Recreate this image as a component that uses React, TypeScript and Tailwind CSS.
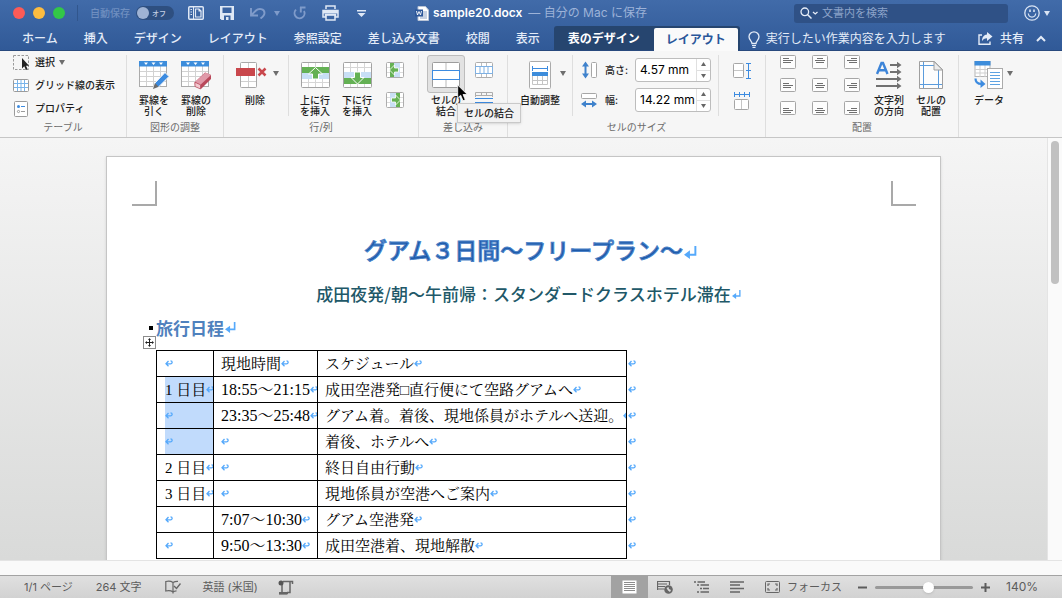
import React from "react";

type Kids = { children?: React.ReactNode };

const UI = "font-['Inter','Noto_Sans_CJK_JP',sans-serif]";
const GOTHIC = "font-['Noto_Sans_CJK_JP',sans-serif]";
const MINCHO = "font-['Liberation_Serif','Noto_Serif_CJK_JP','Noto_Sans_CJK_JP',serif]";

function Svg({ w, h, children, className }: Kids & { w: number; h: number; className?: string }) {
  return (
    <svg width={w} height={h} viewBox={`0 0 ${w} ${h}`} fill="none" className={`shrink-0 ${className ?? ""}`} aria-hidden="true">
      {children}
    </svg>
  );
}

function Caret({ className }: { className?: string }) {
  return (
    <Svg w={6} h={5} className={className}>
      <path d="M0 0h6L3 5z" fill="currentColor" />
    </Svg>
  );
}

/* ---------- title bar ---------- */

function TitleBar() {
  return (
    <div className="grid h-[26px] grid-cols-[1fr_auto_1fr] items-center text-[#d9e4f4]">
      <div className="flex items-center">
        <div className="ml-[13px] flex gap-2">
          <button aria-label="閉じる" className="size-3 rounded-full bg-[#fc5b57]" />
          <button aria-label="しまう" className="size-3 rounded-full bg-[#fdbc40]" />
          <button aria-label="拡大" className="size-3 rounded-full bg-[#33c748]" />
        </div>
        <span className="ml-3 h-4 w-px bg-[#31568d]" />
        <label className="ml-3 flex items-center gap-[6px] text-[10px] font-medium text-[#6f8fc0]">
          自動保存
          <span className="relative flex h-[14px] w-[38px] items-center rounded-full bg-[#2e4f80]">
            <input type="checkbox" className="peer absolute inset-0 m-0 cursor-pointer appearance-none rounded-full" />
            <span className="pointer-events-none ml-px size-3 rounded-full bg-[#9fb3d4]" />
            <span className="pointer-events-none ml-[3px] text-[7px] leading-none text-[#c3d0e4]">オフ</span>
          </span>
        </label>
        <button aria-label="サイドバー" className="ml-[14px]">
          <Svg w={16} h={14}>
            <rect x="0.75" y="0.75" width="14.5" height="12.5" rx="1" stroke="#dfe8f5" strokeWidth="1.5" />
            <path d="M5.500 1v12" stroke="#dfe8f5" />
            <path d="M2.500 3.500h1.500M2.500 6h1.500M2.500 8.500h1.500" stroke="#dfe8f5" />
            <path d="M7.500 3h3.500l2 2v6h-5.500z" stroke="#dfe8f5" strokeWidth="1.2" />
            <path d="M10.500 2.500L13.500 5.500h-3z" fill="#dfe8f5" />
          </Svg>
        </button>
        <button aria-label="保存" className="ml-4">
          <Svg w={14} h={14}>
            <path d="M0 0h14v14H1.500L0 12.500z" fill="#dfe8f5" />
            <path d="M2.500 1.500h9V7h-9zM4 9.500h6.500V14H8.500v-3H6v3H4z" fill="#3a63a1" />
          </Svg>
        </button>
        <button aria-label="元に戻す" className="ml-4 flex items-center gap-2 text-[#7f9bca]">
          <Svg w={16} h={12}>
            <path d="M1 1v7.500h7M1.500 8L6 3.500C8.500 1 14.500 1.500 14.500 6c0 2.200-1.400 3.600-4 5.500" stroke="currentColor" strokeWidth="1.900" />
          </Svg>
          <Caret />
        </button>
        <button aria-label="やり直し" className="ml-[13px] text-[#7f9bca]">
          <Svg w={13} h={14}>
            <path d="M3 3.700A5 5 0 1 0 11 5M7 1.500h5.500M7.800 1v5.500" stroke="currentColor" strokeWidth="1.900" />
          </Svg>
        </button>
        <button aria-label="印刷" className="ml-4">
          <Svg w={17} h={16}>
            <path d="M4 4V1h9v3M1 5.500h15v6.500h-2.500v-2.500h-10V12H1z" stroke="#dfe8f5" strokeWidth="1.500" />
            <path d="M1 5h15v3.500H1z" fill="#dfe8f5" />
            <rect x="4" y="10" width="9" height="5" stroke="#dfe8f5" strokeWidth="1.500" />
          </Svg>
        </button>
        <button aria-label="カスタマイズ" className="ml-[18px]">
          <Svg w={9} h={7}>
            <path d="M0 .75h9" stroke="#dfe8f5" strokeWidth="1.500" />
            <path d="M.5 3h8l-4 4z" fill="#dfe8f5" />
          </Svg>
        </button>
      </div>

      <div className="flex items-center text-[12px] whitespace-nowrap">
        <Svg w={14} h={15} className="mr-1">
          <path d="M3 .5h7.500L13.500 4v10.500H3z" fill="#fff" stroke="#b9c4d6" />
          <path d="M5 6h7M5 8h7M5 10h7M5 12h7" stroke="#8fa4c6" />
          <path d="M0 3.500h8v7H0z" fill="#2c579a" />
          <path d="M1.500 5l1 4 1.500-3.500L5.500 9l1-4" stroke="#fff" strokeWidth=".9" />
        </Svg>
        <h1 className="text-[12px] font-semibold text-white">sample20.docx</h1>
        <span className="ml-[6px] text-[#9db3d8]">— 自分の Mac に保存</span>
      </div>

      <div className="flex items-center justify-end">
        <label className="flex h-[19px] w-[214px] items-center rounded-[3px] bg-[#2f5186] pl-[6px]">
          <Svg w={18} h={12}>
            <circle cx="4.800" cy="4.800" r="3.800" stroke="#e6edf8" strokeWidth="1.300" />
            <path d="M7.500 7.500l4 4" stroke="#e6edf8" strokeWidth="1.500" />
            <path d="M13 5l2.250 2L17.500 5" stroke="#e6edf8" strokeWidth="1.300" />
          </Svg>
          <input
            type="search"
            aria-label="文書内を検索"
            placeholder="文書内を検索"
            className="ml-1 w-full min-w-0 bg-transparent text-[11px] text-white outline-none placeholder:text-[#8ca3c9]"
          />
        </label>
        <button aria-label="フィードバック" className="mr-3 ml-4 flex items-center gap-1">
          <Svg w={16} h={16}>
            <circle cx="8" cy="8" r="7.200" stroke="#d9e4f4" strokeWidth="1.300" />
            <path d="M4.300 8.500c.5 4.700 6.900 4.700 7.400 0" stroke="#d9e4f4" strokeWidth="1.200" />
            <path d="M6 4.500v2.500M10 4.500v2.500" stroke="#d9e4f4" strokeWidth="1.600" />
          </Svg>
          <Caret />
        </button>
      </div>
    </div>
  );
}

const TABS = ["ホーム", "挿入", "デザイン", "レイアウト", "参照設定", "差し込み文書", "校閲", "表示"];

function TabBar() {
  return (
    <nav className="flex h-[25px] items-stretch border-b border-[#28497d] pl-[9px] text-[12px] whitespace-nowrap text-[#e4ecf8]">
      {TABS.map((t) => (
        <button key={t} className="px-[13px] pt-[2px] font-medium">
          {t}
        </button>
      ))}
      <div className="ml-px flex items-stretch rounded-t-[3px] bg-[#26456f] pr-[2px]">
        <button className="px-[14px] pt-[2px] font-bold text-white">表のデザイン</button>
        <button className="-mb-px mt-[2px] rounded-t-[2px] bg-[#fafafa] px-3 font-bold text-[#2b579a]">レイアウト</button>
      </div>
      <button className="ml-2 flex items-center gap-[6px] pt-[2px]">
        <Svg w={12} h={17}>
          <path d="M4 12.500c0-2.500-3-3.500-3-6.700a5 5 0 0 1 10 0c0 3.200-3 4.200-3 6.700z" stroke="#e4ecf8" strokeWidth="1.300" />
          <path d="M4 14.500h4M4.500 16.300h3" stroke="#e4ecf8" strokeWidth="1.200" />
        </Svg>
        実行したい作業内容を入力します
      </button>
      <div className="mr-4 ml-auto flex items-center gap-3 pt-px">
        <button className="flex items-center gap-[7px] font-medium">
          <Svg w={15} h={13}>
            <path d="M4 3H1v9.300h11V9.500" stroke="#e4ecf8" strokeWidth="1.400" />
            <path d="M9 0l5.500 4.500L9 9V6.300C6.500 6.300 5 7.300 4 9.300c0-4.300 2-6.500 5-6.800z" fill="#e4ecf8" />
          </Svg>
          共有
        </button>
        <button aria-label="リボンを折りたたむ">
          <Svg w={10} h={7}>
            <path d="M1 6l4-4 4 4" stroke="#e4ecf8" strokeWidth="2" />
          </Svg>
        </button>
      </div>
    </nav>
  );
}

/* ---------- ribbon ---------- */

function Group({ label, className, children }: Kids & { label?: string; className: string }) {
  return (
    <section className={`flex shrink-0 flex-col border-r border-[#dedede] ${className}`}>
      <div className="flex h-[66px] items-start">{children}</div>
      <div className="h-3 text-center text-[10px] leading-3 text-[#6b6b6b]">{label}</div>
    </section>
  );
}

function Big({ lines, className, icon, caret }: { lines: string[]; className: string; icon: React.ReactNode; caret?: boolean }) {
  return (
    <button className={`relative flex shrink-0 flex-col items-center pt-1 ${className}`}>
      <span className="flex h-8 items-center">{icon}</span>
      {caret && <Caret className="absolute top-[16px] left-full -ml-1 text-[#6e6e6e]" />}
      <span className="mt-1 text-[10px] leading-[11px] font-medium whitespace-nowrap text-[#1d1d1d]">
        {lines.map((l) => (
          <span key={l} className="block">
            {l}
          </span>
        ))}
      </span>
    </button>
  );
}

function ShortDivider() {
  return <span className="h-[61px] w-px shrink-0 bg-[#dedede]" />;
}

function GridBase() {
  return (
    <>
      <rect x=".5" y="1.500" width="27" height="25" fill="#fff" stroke="#ababab" />
      <path d="M7.500 6v20M14.500 6v20M21.500 6v20M1 11.500h26M1 16.500h26M1 21.500h26" stroke="#d2d2d2" />
      <path d="M0 1h28v5.500H0z" fill="#3d8ddb" />
      <path d="M5 2.500h4L7 5zM12.500 2.500h4l-2 2.500zM20 2.500h4L22 5z" fill="#fff" />
    </>
  );
}

const DrawTable = (
  <Svg w={30} h={30}>
    <GridBase />
    <path d="M14 29l2-6L26 12.500l4 4L19.500 27z" fill="#3c8be0" stroke="#f6f6f6" />
    <path d="M14 29l2-6 3.700 3.800z" fill="#6b6b6b" />
  </Svg>
);

const EraseTable = (
  <Svg w={30} h={30}>
    <GridBase />
    <path d="M13.500 22.500L24 12.500l6 2.500v4L20 29l-6-2.500z" fill="#b8485a" />
    <path d="M14 22L24.500 12.500 30 15 19.500 24.800z" fill="#e09aa9" />
    <path d="M14 22.300l5.500 2.500V29L14 26.500z" fill="#f2c9d0" stroke="#b8485a" strokeWidth=".7" />
  </Svg>
);

const DeleteIcon = (
  <Svg w={38} h={28}>
    <rect x="4.500" y="1.500" width="16" height="25" rx="1" fill="#fff" stroke="#a9a9a9" />
    <path d="M12.500 2v24M5 20.500h15" stroke="#cfcfcf" />
    <rect x="0" y="7" width="19" height="8" fill="#c9474c" />
    <path d="M22.500 7.500l7 7M29.500 7.500l-7 7" stroke="#c9474c" strokeWidth="2.500" />
  </Svg>
);

function InsertRow({ down }: { down?: boolean }) {
  return (
    <Svg w={29} h={28}>
      <rect x=".5" y="1.500" width="28" height="25" rx="1" fill="#fff" stroke="#a3a3a3" />
      <path d="M7.500 2v24M14.500 2v24M21.500 2v24M1 6.500h27M1 21.500h27" stroke="#d6d6d6" />
      {down ? (
        <>
          <path d="M1 11h27v6H1z" fill="#c8dff5" />
          <path d="M1 17h27v6H1z" fill="#64b154" />
          <path d="M14.500 23l6.500-6.500h-3.500V11h-6v5.500H8z" fill="#64b154" stroke="#fff" />
        </>
      ) : (
        <>
          <path d="M1 12h27v6H1z" fill="#c8dff5" />
          <path d="M1 6h27v6H1z" fill="#64b154" />
          <path d="M14.500 6.500l7 6.500h-4v5h-6v-5h-4z" fill="#64b154" stroke="#fff" />
        </>
      )}
    </Svg>
  );
}

function InsertCol({ right }: { right?: boolean }) {
  return (
    <button aria-label={right ? "右に列を挿入" : "左に列を挿入"}>
      <Svg w={18} h={16}>
        <rect x=".5" y=".5" width="17" height="15" rx="1" fill="#fff" stroke="#adadad" />
        <path d="M1 5.500h16M1 10.500h16" stroke="#dcdcdc" />
        {right ? (
          <>
            <path d="M4 1h6v14H4z" fill="#c8dff5" />
            <path d="M10 1h4v14h-4z" fill="#64b154" />
            <path d="M14.500 8L9.500 3v3H5.500v4h4v3z" fill="#64b154" stroke="#fff" strokeWidth=".8" />
          </>
        ) : (
          <>
            <path d="M8 1h6v14H8z" fill="#c8dff5" />
            <path d="M4 1h4v14H4z" fill="#64b154" />
            <path d="M3.500 8l5-5v3h4v4h-4v3z" fill="#64b154" stroke="#fff" strokeWidth=".8" />
          </>
        )}
      </Svg>
    </button>
  );
}

const MergeIcon = (
  <Svg w={28} h={28}>
    <rect x=".5" y="1.500" width="27" height="25" rx="1" fill="#fff" stroke="#9d9d9d" />
    <path d="M14 2v7M14 19v7" stroke="#b9b9b9" />
    <rect x=".5" y="9.500" width="27" height="9" fill="#fff" stroke="#3c8be0" />
  </Svg>
);

const AutoFit = (
  <Svg w={22} h={28}>
    <rect x=".5" y=".5" width="21" height="27" rx="1" fill="#fff" stroke="#ababab" />
    <path d="M3.500 5v5M18.500 5v5M4 7.500h14" stroke="#3c8be0" />
    <path d="M3 11h16v4H3z" fill="#3d8ddb" />
    <path d="M3.500 15v8.500h15V15M8.500 15v8.500M13.500 15v8.500M4 19.500h14" stroke="#c4c4c4" />
  </Svg>
);

const TextDirection = (
  <Svg w={26} h={28}>
    <path d="M1 13L5.500 2h1.500L11.500 13M2.800 9.300h7" stroke="#3c84d8" strokeWidth="2.400" />
    <path d="M14 4h9M14 11h9M0 18h23M0 25h23" stroke="#707070" strokeWidth="2" />
    <path d="M21 .8L25.500 4 21 7.200zM21 7.800l4.500 3.200-4.500 3.200zM21 14.800l4.500 3.200-4.500 3.200zM21 21.800l4.500 3.200-4.500 3.200z" fill="#707070" />
  </Svg>
);

const CellMargins = (
  <Svg w={24} h={28}>
    <path d="M.5 .5h15l8 8v19H.5z" fill="#fdfdfd" stroke="#9f9f9f" />
    <path d="M4.500 1v26M19.500 9v18M1 4.500h15M1 23.500h22" stroke="#5a9bdc" />
    <path d="M15 .5v8.500h8.500z" fill="#ececec" stroke="#9f9f9f" />
  </Svg>
);

const DataIcon = (
  <Svg w={30} h={28}>
    <rect x="1" y=".5" width="15" height="15" fill="#fff" stroke="#b5b5b5" />
    <path d="M6 4v12M11 4v12M1 8.500h15M1 12h15" stroke="#cfcfcf" />
    <path d="M.5 0h16v4.500H.5z" fill="#3d8ddb" />
    <rect x="13.500" y="7.500" width="15" height="20" fill="#fff" stroke="#ababab" />
    <path d="M16 11.500h10M16 14.500h10M16 17.500h10M16 20.500h10M16 23.500h10" stroke="#5ea3e2" />
    <path d="M1.500 17.500c0 4 2 5.500 6 5.500" stroke="#3c8be0" strokeWidth="2.200" />
    <path d="M6.500 18.500l5 4.500-5 4z" fill="#3c8be0" />
  </Svg>
);

function SizeField({ id, label, value, icon }: { id: string; label: string; value: string; icon: React.ReactNode }) {
  return (
    <div className="flex h-6 items-center">
      <span className="flex w-4 justify-center">{icon}</span>
      <label htmlFor={id} className="ml-2 w-[30px] text-[10px] font-medium text-[#1d1d1d]">
        {label}
      </label>
      <div className="flex h-6 w-[76px] overflow-hidden rounded-[3px] border border-[#bdbdbd] bg-white">
        <input id={id} defaultValue={value} className="w-full min-w-0 pl-1 text-[12px] text-black outline-none" />
        <div className="flex w-[14px] shrink-0 flex-col border-l border-[#e0e0e0] text-[#666]">
          <button aria-label={`${label}増やす`} className="flex flex-1 items-center justify-center border-b border-[#e0e0e0]">
            <Svg w={5} h={4}>
              <path d="M0 4h5L2.500 0z" fill="currentColor" />
            </Svg>
          </button>
          <button aria-label={`${label}減らす`} className="flex flex-1 items-center justify-center">
            <Svg w={5} h={4}>
              <path d="M0 0h5L2.500 4z" fill="currentColor" />
            </Svg>
          </button>
        </div>
      </div>
    </div>
  );
}

const ALIGN_X = ["左", "中央", "右"];
const ALIGN_Y = ["上", "中", "下"];

function AlignButton({ col, row }: { col: number; row: number }) {
  const y = [3.5, 5.5, 7.5][row];
  const widths = [6, 10, 8];
  return (
    <button aria-label={`${ALIGN_Y[row]}揃え（${ALIGN_X[col]}）`}>
      <Svg w={16} h={14}>
        <rect x=".5" y=".5" width="15" height="13" rx="1" fill="#fdfdfd" stroke="#a6a6a6" />
        {widths.map((w, i) => {
          const x = col === 0 ? 3 : col === 1 ? 8 - w / 2 : 13 - w;
          return <path key={i} d={`M${x} ${y + i * 2}h${w}`} stroke="#6f6f6f" />;
        })}
      </Svg>
    </button>
  );
}

function Ribbon() {
  return (
    <div className="flex h-[87px] shrink-0 border-b border-[#c6c6c6] bg-[#f6f6f6] pt-1">
      <Group label="テーブル" className="w-[127px]">
        <div className="flex flex-col gap-2 pl-[13px] text-[10px] font-medium whitespace-nowrap text-[#1d1d1d]">
          <button className="flex h-[15px] items-center gap-[6px]">
            <Svg w={16} h={16}>
              <rect x=".5" y=".5" width="15" height="14" stroke="#9b9b9b" strokeDasharray="2.500 1.500" />
              <path d="M9 3v10.500l2.300-2.200 1.600 3.700 1.700-.8-1.600-3.500h3z" fill="#222" />
            </Svg>
            選択
            <Caret className="-ml-[2px] text-[#6e6e6e]" />
          </button>
          <button className="flex h-[15px] items-center gap-[6px]">
            <Svg w={16} h={13}>
              <rect x=".5" y=".5" width="15" height="12" rx="1" fill="#fff" stroke="#9b9b9b" />
              <path d="M4.500 1v11M8 1v11M11.500 1v11M1 4.500h14M1 8.500h14" stroke="#79b4ea" />
            </Svg>
            グリッド線の表示
          </button>
          <button className="flex h-[15px] items-center gap-[6px]">
            <span className="flex w-4 justify-center">
              <Svg w={14} h={16}>
                <rect x=".5" y=".5" width="13" height="15" rx="1" fill="#fff" stroke="#9b9b9b" />
                <circle cx="4.500" cy="5.500" r="1.500" fill="#3c8be0" />
                <path d="M7 5.500h4" stroke="#3c8be0" />
                <circle cx="4.500" cy="10.500" r="1.100" stroke="#9b9b9b" />
                <path d="M7 10.500h4" stroke="#9b9b9b" />
              </Svg>
            </span>
            プロパティ
          </button>
        </div>
      </Group>

      <Group label="図形の調整" className="w-[97px]">
        <Big lines={["罫線を", "引く"]} className="ml-[6px] w-[42px]" icon={DrawTable} />
        <Big lines={["罫線の", "削除"]} className="w-[42px]" icon={EraseTable} />
      </Group>

      <Group label="行/列" className="w-[195px]">
        <Big lines={["削除"]} className="mr-[11px] ml-[9px] w-[44px]" icon={DeleteIcon} caret />
        <ShortDivider />
        <Big lines={["上に行", "を挿入"]} className="ml-[5px] w-[42px]" icon={<InsertRow />} />
        <Big lines={["下に行", "を挿入"]} className="w-[42px]" icon={<InsertRow down />} />
        <div className="ml-2 flex flex-col gap-[14px] pt-[7px]">
          <InsertCol />
          <InsertCol right />
        </div>
      </Group>

      <Group label="差し込み" className="w-[89px]">
        <div className="relative ml-2">
          <span className="absolute inset-x-0 top-0 h-[38px] rounded-[3px] border border-[#bcbcbc] bg-[#e2e2e2]" />
          <Big lines={["セルの", "結合"]} className="w-[38px]" icon={MergeIcon} />
          <Svg w={12} h={18} className="absolute top-[29px] left-[30px] z-20">
            <path d="M.7 1v13l3-2.800 2.300 5.500 2.300-1L6 10.500h4.300z" fill="#000" stroke="#fff" strokeWidth=".8" />
          </Svg>
          <span role="tooltip" className="absolute top-12 left-[30px] z-10 flex h-5 items-center border border-[#c9c9c9] bg-[#f2f2f2] px-[6px] text-[10px] font-medium whitespace-nowrap text-[#222] shadow-sm">
            セルの結合
          </span>
        </div>
        <div className="ml-[10px] flex flex-col gap-[14px] pt-[7px]">
          <button aria-label="セルの分割">
            <Svg w={18} h={16}>
              <rect x=".5" y=".5" width="17" height="15" rx="1" fill="#fff" stroke="#adadad" />
              <path d="M6.500 1v3M11.500 1v3M6.500 12v3M11.500 12v3" stroke="#bdbdbd" />
              <path d="M.5 4.500h17v7H.5zM5 4.500v7M9 4.500v7M13 4.500v7" stroke="#7fb1e3" />
            </Svg>
          </button>
          <button aria-label="表の分割">
            <Svg w={18} h={16}>
              <path d="M.5 5V.5h17V5M.5 11v4.500h17V11M6.500 1v3M11.500 1v3M1 3.500h16" stroke="#adadad" />
              <path d="M0 6.500h18M0 10.500h18" stroke="#3c8be0" />
            </Svg>
          </button>
        </div>
      </Group>

      <Group label="セルのサイズ" className="w-[258px]">
        <Big lines={["自動調整"]} className="mr-2 ml-2 w-[48px]" icon={AutoFit} caret />
        <ShortDivider />
        <div className="ml-2 flex flex-col gap-[6px] pt-[3px]">
          <SizeField
            id="row-height"
            label="高さ:"
            value="4.57 mm"
            icon={
              <Svg w={15} h={18}>
                <path d="M3.500 3v12" stroke="#3f82cc" strokeWidth="2" />
                <path d="M0 5.500L3.500 .5 7 5.500zM0 12.500l3.500 5 3.500-5z" fill="#3f82cc" />
                <rect x="9.500" y="1.500" width="5" height="15" rx="1" fill="#fff" stroke="#a6a6a6" />
              </Svg>
            }
          />
          <SizeField
            id="col-width"
            label="幅:"
            value="14.22 mm"
            icon={
              <Svg w={16} h={15}>
                <rect x=".5" y=".5" width="15" height="5" rx="1" fill="#fff" stroke="#a6a6a6" />
                <path d="M3 11h10" stroke="#3f82cc" strokeWidth="2" />
                <path d="M5 7.500L0 11l5 3.500zM11 7.500l5 3.500-5 3.500z" fill="#3f82cc" />
              </Svg>
            }
          />
        </div>
        <span className="w-[7px]" />
        <ShortDivider />
        <div className="ml-[14px] flex flex-col gap-3 pt-[7px]">
          <button aria-label="高さを揃える">
            <Svg w={18} h={18}>
              <rect x=".5" y="1.500" width="10" height="14" rx="1" fill="#fff" stroke="#a6a6a6" />
              <path d="M1 8.500h9" stroke="#c6c6c6" />
              <path d="M15.500 1v16M13 1.500h5M13 8.500h5M13 16.500h5" stroke="#3c8be0" />
            </Svg>
          </button>
          <button aria-label="幅を揃える">
            <Svg w={18} h={18}>
              <rect x="1.500" y="7.500" width="14" height="10" rx="1" fill="#fff" stroke="#a6a6a6" />
              <path d="M8.500 8v9" stroke="#c6c6c6" />
              <path d="M1 2.500h16M1.500 0v5M6.500 0v5M11.500 0v5M16.500 0v5" stroke="#3c8be0" />
            </Svg>
          </button>
        </div>
      </Group>

      <Group label="配置" className="w-[193px]">
        <div className="ml-[14px] grid grid-cols-3 gap-x-4 gap-y-[9px]">
          {[0, 1, 2].map((r) => [0, 1, 2].map((c) => <AlignButton key={`${r}${c}`} row={r} col={c} />))}
        </div>
        <Big lines={["文字列", "の方向"]} className="ml-2 w-[42px]" icon={TextDirection} />
        <Big lines={["セルの", "配置"]} className="w-[42px]" icon={CellMargins} />
      </Group>

      <section className="pl-2">
        <Big lines={["データ"]} className="w-[44px]" icon={DataIcon} caret />
      </section>
    </div>
  );
}

/* ---------- document ---------- */

function Ret() {
  return (
    <Svg w={8} h={7} className="inline-block align-middle">
      <path d="M3.500 1L1 3.800l2.500 2.500M1 3.800h4.500c2.200 0 2.200-3 0-3" stroke="#55a9fb" strokeWidth="1.300" />
    </Svg>
  );
}

function ParagraphMark({ size }: { size: number }) {
  return (
    <svg width={size} height={size} viewBox="0 0 12 12" fill="none" className="absolute bottom-[7px] left-full ml-px" aria-hidden="true">
      <path d="M10.500 0v8H4" stroke="#55a9fb" strokeWidth="1.800" />
      <path d="M0 8l5.500-4v8z" fill="#55a9fb" />
    </svg>
  );
}

const ROWS: { cells: [string, string, string]; selected?: boolean }[] = [
  { cells: ["", "現地時間", "スケジュール"] },
  { cells: ["1 日目", "18:55〜21:15", "成田空港発□直行便にて空路グアムへ"], selected: true },
  { cells: ["", "23:35〜25:48", "グアム着。着後、現地係員がホテルへ送迎。"], selected: true },
  { cells: ["", "", "着後、ホテルへ"], selected: true },
  { cells: ["2 日目", "", "終日自由行動"] },
  { cells: ["3 日目", "", "現地係員が空港へご案内"] },
  { cells: ["", "7:07〜10:30", "グアム空港発"] },
  { cells: ["", "9:50〜13:30", "成田空港着、現地解散"] },
];

function Schedule() {
  return (
    <div className="relative mt-[10px]">
      <span className="absolute -top-[14px] -left-[13px] flex size-[13px] items-center justify-center border border-[#8c8c8c] bg-white">
        <Svg w={9} h={9}>
          <path d="M4.500 1v7M1 4.500h7" stroke="#222" />
          <path d="M4.500 0L3 2h3zM4.500 9L3 7h3zM0 4.500L2 3v3zM9 4.500L7 3v3z" fill="#222" />
        </Svg>
      </span>
      <table className={`w-[471px] table-fixed border-collapse text-[15px] leading-5 text-black ${MINCHO}`}>
        <colgroup>
          <col className="w-[57px]" />
          <col className="w-[104px]" />
          <col />
        </colgroup>
        <tbody>
          {ROWS.map((r, i) => (
            <tr key={i} className="h-[26px]">
              {r.cells.map((c, j) => (
                <td key={j} className={`relative h-[26px] border border-black p-0 whitespace-nowrap ${j === 0 ? "pl-2" : "pl-[7px]"}`}>
                  <div
                    className={`flex h-[25px] items-center overflow-hidden ${r.selected && j === 0 ? "bg-[#c1dbfc]" : ""} ${j === 1 && i > 0 ? "text-[16px]" : ""}`}
                  >
                    {c}
                    <Ret />
                  </div>
                  {j === 2 && (
                    <span className="absolute top-0 left-full ml-[2px] flex h-[25px] items-center">
                      <Ret />
                    </span>
                  )}
                </td>
              ))}
            </tr>
          ))}
        </tbody>
      </table>
    </div>
  );
}

function Workspace() {
  return (
    <main className="flex min-h-0 flex-1">
      <div className="flex min-w-0 flex-1 justify-center overflow-hidden bg-linear-to-b from-[#f5f5f5] to-[#d9dad9] pt-[18px]">
        <article className="h-[1180px] w-full max-w-[835px] border border-[#c5c5c5] bg-white px-[49px] pt-6 shadow-sm">
          <div className="-mr-[25px] -ml-6 flex justify-between">
            <span className="size-[25px] border-r-2 border-b-2 border-[#a9a9a9]" />
            <span className="size-[25px] border-b-2 border-l-2 border-[#a9a9a9]" />
          </div>
          <h2 className={`mt-[26px] text-center text-[23px] leading-[34px] font-medium text-[#1f5aa8] [-webkit-text-stroke:1px_#4a82c8] ${GOTHIC}`}>
            <span className="relative">
              グアム３日間〜フリープラン〜
              <ParagraphMark size={13} />
            </span>
          </h2>
          <p className={`mt-4 text-center text-[17px] leading-6 font-medium text-[#215868] ${GOTHIC}`}>
            <span className="relative">
              成田夜発/朝〜午前帰：スタンダードクラスホテル滞在
              <ParagraphMark size={9} />
            </span>
          </p>
          <h3 className={`relative mt-[10px] text-[17px] leading-6 font-bold text-[#4f81bd] ${GOTHIC}`}>
            <span className="absolute top-[10px] -left-[7px] size-1 bg-black" />
            <span className="relative">
              旅行日程
              <ParagraphMark size={11} />
            </span>
          </h3>
          <Schedule />
        </article>
      </div>
      <div className="w-[15px] shrink-0 border-l border-[#e4e4e4] bg-[#fafafa] pt-[3px] pl-[3px]">
        <div className="h-[143px] w-2 rounded-full bg-[#c1c1c1]" />
      </div>
    </main>
  );
}

/* ---------- status bar ---------- */

function StatusBar() {
  return (
    <footer className="flex h-[23px] shrink-0 items-center border-t border-[#a3a3a3] bg-linear-to-b from-[#e0e0e0] to-[#d2d2d2] text-[11px] whitespace-nowrap text-[#5c5c5c]">
      <button className="ml-6">1/1 ページ</button>
      <button className="ml-[23px]">264 文字</button>
      <button aria-label="文章校正" className="ml-[23px]">
        <Svg w={16} h={14}>
          <path d="M8 2.500C6 1 3 1 .8 1.500v9.500c2.200-.5 5.200-.5 7.200 1 1-.8 2-1.100 3.500-1.200M8 2.500v11M8 2.500c1.500-1 3-1.300 5-1.200" stroke="#666" strokeWidth="1.200" />
          <path d="M9 6l2.500 2.500L15.500 3.500" stroke="#666" strokeWidth="1.400" />
        </Svg>
      </button>
      <button className="ml-[22px]">英語 (米国)</button>
      <button aria-label="マクロの記録" className="ml-5">
        <Svg w={16} h={15}>
          <path d="M5 1.500h9.500v2.500M12 1.500v11H9M4 5v8.500M1 13.500h9" stroke="#666" strokeWidth="1.500" />
          <circle cx="3" cy="3" r="2.500" fill="#555" />
          <path d="M1 12h8v2.500H1z" fill="#666" />
        </Svg>
      </button>

      <div className="ml-auto flex h-full items-center">
        <button aria-label="印刷レイアウト" className="flex h-full w-[37px] items-center justify-center bg-[#a2a2a2]">
          <Svg w={15} h={14}>
            <rect x=".5" y=".5" width="14" height="13" fill="#fff" />
            <path d="M2 2.500h11M2 4.500h11M2 6.500h11M2 8.500h11M2 10.500h11" stroke="#8c8c8c" />
          </Svg>
        </button>
        <button aria-label="Web レイアウト" className="ml-[9px]">
          <Svg w={17} h={14}>
            <path d="M1 1.500h11M1 4h9M1 6.500h7M1 9h6M.5 1v9M12.500 1v4" stroke="#666" strokeWidth="1.200" />
            <circle cx="11.500" cy="9.500" r="4.300" fill="#666" />
            <path d="M9.500 8l2-1 .5 2 2 1-1 2-2-1.500z" fill="#d8d8d8" />
          </Svg>
        </button>
        <button aria-label="アウトライン" className="ml-5">
          <Svg w={16} h={12}>
            <path d="M0 1h2M3.500 1H11M3 4h2M6.500 4H15M6 7.500h2M9 7.500h6M3 11h2M6.500 11H15" stroke="#666" strokeWidth="1.300" />
          </Svg>
        </button>
        <button aria-label="下書き" className="ml-5">
          <Svg w={14} h={12}>
            <path d="M0 1h14M0 4h10M0 7.500h14M0 11h10" stroke="#666" strokeWidth="1.300" />
          </Svg>
        </button>
        <button className="ml-[21px] flex items-center gap-[7px]">
          <Svg w={15} h={12}>
            <rect x=".5" y=".5" width="14" height="11" rx="1" stroke="#666" />
            <path d="M3 5V3h2M10 3h2v2M12 7v2h-2M5 9H3V7" stroke="#666" strokeWidth="1.200" />
          </Svg>
          フォーカス
        </button>
        <button aria-label="縮小" className="ml-4">
          <Svg w={9} h={9}>
            <path d="M0 4.500h9" stroke="#5c5c5c" strokeWidth="2" />
          </Svg>
        </button>
        <input
          type="range"
          aria-label="ズーム"
          min={0}
          max={100}
          defaultValue={55}
          className="mx-2 h-[3px] w-[98px] appearance-none rounded-full bg-[#999] [&::-webkit-slider-thumb]:size-[11px] [&::-webkit-slider-thumb]:appearance-none [&::-webkit-slider-thumb]:rounded-full [&::-webkit-slider-thumb]:bg-white [&::-webkit-slider-thumb]:shadow"
        />
        <button aria-label="拡大">
          <Svg w={9} h={9}>
            <path d="M0 4.500h9M4.500 0v9" stroke="#5c5c5c" strokeWidth="2" />
          </Svg>
        </button>
        <button className="mr-6 ml-4 text-[12px]">140%</button>
      </div>
    </footer>
  );
}

export default function App() {
  return (
    <div lang="ja" className={`flex h-screen flex-col overflow-hidden bg-[#fafafa] ${UI}`}>
      <header className="shrink-0 bg-linear-to-b from-[#416ba9] to-[#305997]">
        <TitleBar />
        <TabBar />
      </header>
      <Ribbon />
      <Workspace />
      <div className="h-[15px] shrink-0 border-t border-[#e4e4e4] bg-[#fafafa]" />
      <StatusBar />
    </div>
  );
}
